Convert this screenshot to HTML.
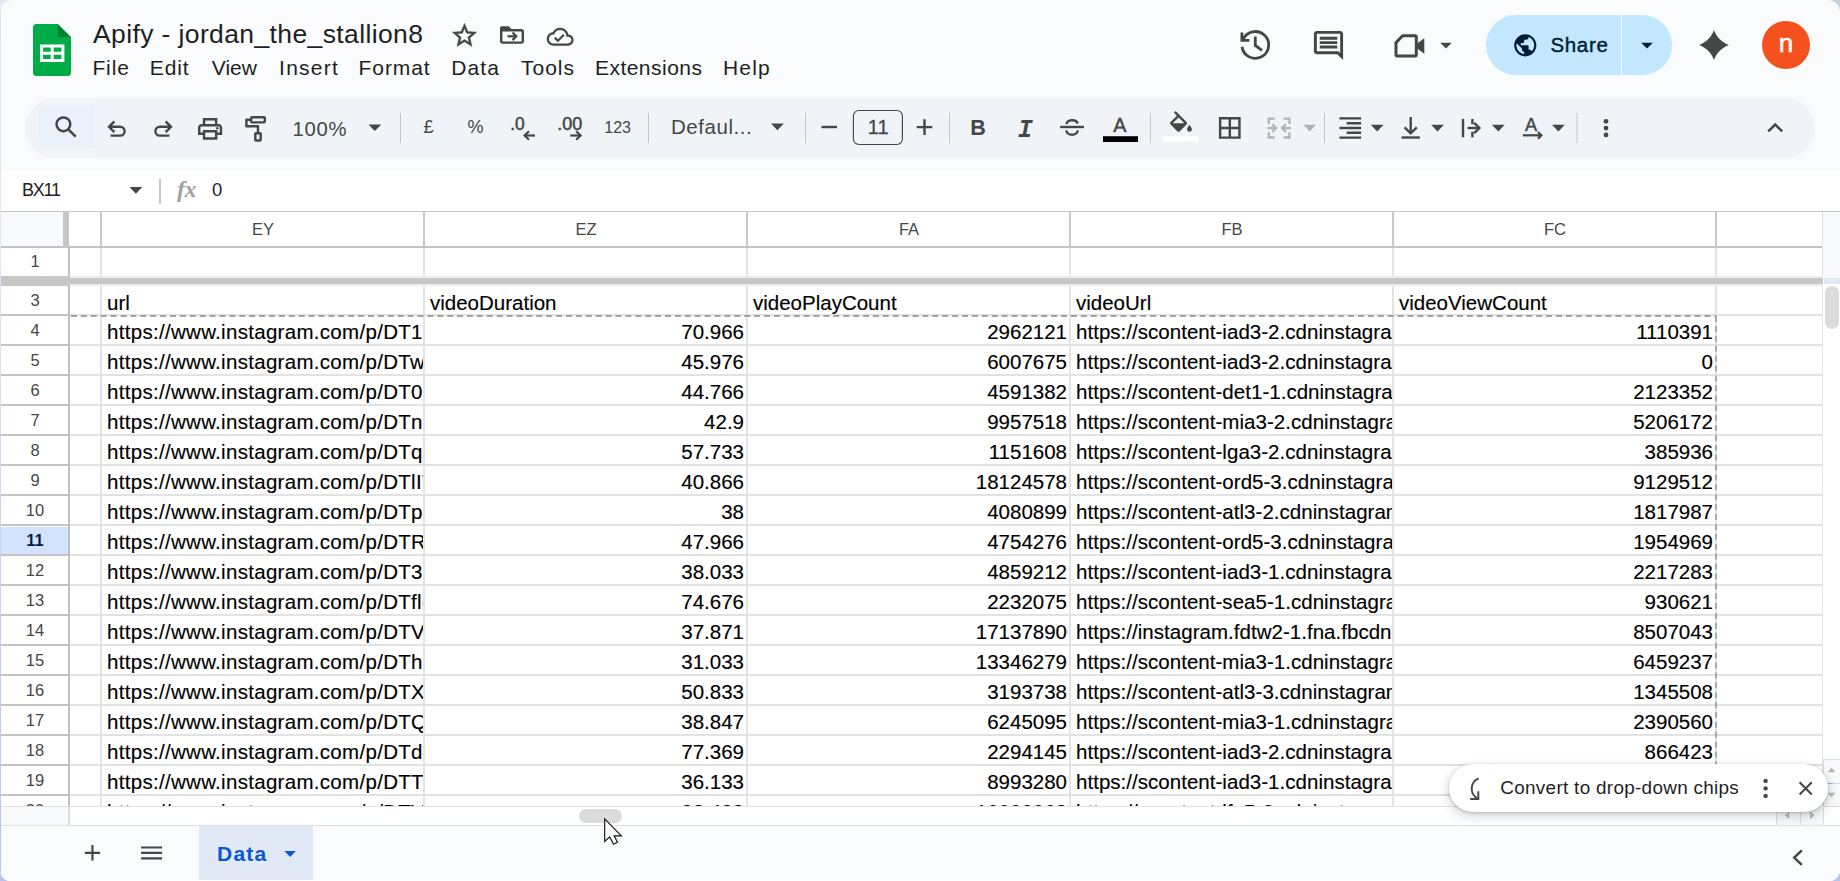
<!DOCTYPE html>
<html lang="en">
<head>
<meta charset="utf-8">
<title>Apify - jordan_the_stallion8 - Google Sheets</title>
<style>
*{box-sizing:border-box;margin:0;padding:0}
html,body{width:1840px;height:881px;overflow:hidden}
body{background:linear-gradient(to right,#e0e6f2,#c5d0e0) top/100% 50% no-repeat,#b7c4f0}
body{font-family:"Liberation Sans",Arial,sans-serif;color:#1f1f1f}
#app{position:absolute;left:0;top:0;width:1840px;height:881px;background:#f9fbfd;border-radius:12px 12px 11px 11px;overflow:hidden}
.abs{position:absolute}
svg.ic{position:absolute;fill:#444746}
.t{position:absolute;white-space:nowrap}
/* header */
#title{left:93px;top:17px;font-size:26.5px;line-height:34px;color:#1f1f1f;letter-spacing:0.38px}
.menu{top:54px;font-size:21px;line-height:28px;color:#1f1f1f}
/* toolbar */
#tb{position:absolute;left:25px;top:98px;width:1790px;height:60px;border-radius:30px;background:#f0f4f9}
.sep{position:absolute;top:113px;width:1px;height:30px;background:#c7c7c7}
.tbt{position:absolute;color:#444746;white-space:nowrap}
/* formula bar */
#fb{position:absolute;left:0;top:170px;width:1840px;height:41px;background:#fff}
/* grid */
#gridbg{position:absolute;left:0;top:211px;width:1840px;height:595px;background:#fff}
#grid{position:absolute;left:0;top:0;width:1840px;height:806px;overflow:hidden}
.vl{position:absolute;width:1px;background:#e1e1e1}
.hl{position:absolute;left:70px;width:1753px;height:1.5px;background:#e2e2e2}
.rb{position:absolute;left:0;width:68px;height:1.5px;background:#c4c4c4}
.rh{position:absolute;left:0;width:68px;height:29px;text-align:center;font-size:16.5px;line-height:27px;color:#444746;background:#fff;padding-left:2px}
.rh.sel{background:#d3e3fd;color:#041e49;font-weight:bold}
.c{position:absolute;width:322px;height:29px;font-size:20.5px;line-height:29px;color:#000;white-space:nowrap;overflow:hidden;padding:0 2px 0 6px;-webkit-text-stroke:0.15px #000}
.c.r{text-align:right}
.c.l{letter-spacing:0.3px}
.ch{position:absolute;top:1px;height:34px;line-height:35px;font-size:16.5px;padding-left:2px;color:#444746;text-align:center;background:#fff}
</style>
</head>
<body>
<div id="app">

<!-- ===== title bar ===== -->
<svg class="abs" style="left:33px;top:24px" width="38" height="52" viewBox="0 0 38 52">
  <path d="M3.5 0H24.7L38 13.3V48.5a3.5 3.5 0 0 1-3.5 3.5H3.5A3.5 3.5 0 0 1 0 48.500V3.5A3.500 3.500 0 0 1 3.5 0Z" fill="#00ac47"/>
  <path d="M24.7 0L38 13.3H28.200a3.500 3.500 0 0 1-3.500-3.500Z" fill="#00832d"/>
  <path d="M7 20.500H31.400V38H7Zm3 3V27.700H17.700V23.500Zm10.700 0V27.700H28.400V23.500ZM10 30.700V35H17.700V30.700Zm10.700 0V35H28.400V30.700Z" fill="#fff" fill-rule="evenodd"/>
</svg>
<div id="title" class="t">Apify - jordan_the_stallion8</div>
<svg class="ic" style="left:449.500px;top:21px;stroke:#444746;stroke-width:0.400" width="29" height="29" viewBox="0 0 24 24"><path d="M22 9.240l-7.190-.620L12 2 9.190 8.630 2 9.240l5.460 4.730L5.820 21 12 17.270 18.180 21l-1.630-7.030L22 9.240zM12 15.400l-3.760 2.270 1-4.280-3.320-2.880 4.380-.380L12 6.100l1.710 4.040 4.380.380-3.320 2.880 1 4.280L12 15.400z"/></svg>



<svg class="abs" style="left:0;top:0" width="1840" height="96" viewBox="0 0 1840 96" fill="#444746">
  <!-- move to folder -->
  <rect x="501.200" y="30.300" width="21.600" height="12.300" rx="1.600" fill="none" stroke="#444746" stroke-width="2.400"/>
  <path d="M500 31V27.800a1.600 1.600 0 0 1 1.600-1.600H508.600L512 29.600V31Z"/>
  <g fill="none" stroke="#444746" stroke-width="2.200"><path d="M507.500 36.300H515.400"/><path d="M512.500 32.500L516.300 36.300L512.500 40.100"/></g>
  <!-- cloud saved -->
  <g transform="translate(546.700,23.300) scale(1.1208)"><path d="M19.350 10.040C18.670 6.590 15.640 4 12 4 9.110 4 6.600 5.640 5.350 8.040 2.340 8.360 0 10.910 0 14c0 3.310 2.690 6 6 6h13c2.760 0 5-2.240 5-5 0-2.640-2.050-4.780-4.650-4.960zM19 18H6c-2.210 0-4-1.790-4-4s1.790-4 4-4h.710C7.370 7.690 9.480 6 12 6c3.040 0 5.500 2.460 5.500 5.500v.500H19c1.660 0 3 1.340 3 3s-1.340 3-3 3zm-9-3.820l-2.090-2.090L6.500 13.500 10 17l6.010-6.010-1.410-1.410z"/></g>
  <!-- version history -->
  <g fill="none" stroke="#444746" stroke-width="2.800">
    <path d="M1242.030 46.760A13.400 13.400 0 1 0 1242.900 39.900"/>
    <path d="M1241.900 32.600V40.400H1249.400"/>
    <path d="M1255.300 36.600V45.500L1262 50.400"/>
  </g>
  <!-- meet camera -->
  <path d="M1396 42.600L1402.600 35.800H1415a1.300 1.300 0 0 1 1.300 1.300V54.800a1.300 1.300 0 0 1-1.300 1.300H1397.300a1.300 1.300 0 0 1-1.300-1.300Z" fill="none" stroke="#444746" stroke-width="3" stroke-linejoin="round"/>
  <path d="M1416.500 44L1424.300 38.300V53.800L1416.500 48Z"/>
</svg>
<div class="t menu" style="left:92.4px;letter-spacing:0.90px">File</div>
<div class="t menu" style="left:149.8px;letter-spacing:0.87px">Edit</div>
<div class="t menu" style="left:211.8px;letter-spacing:0.00px">View</div>
<div class="t menu" style="left:279.1px;letter-spacing:1.24px">Insert</div>
<div class="t menu" style="left:358.6px;letter-spacing:0.92px">Format</div>
<div class="t menu" style="left:451.3px;letter-spacing:1.10px">Data</div>
<div class="t menu" style="left:521.0px;letter-spacing:0.98px">Tools</div>
<div class="t menu" style="left:594.9px;letter-spacing:0.49px">Extensions</div>
<div class="t menu" style="left:723.0px;letter-spacing:1.17px">Help</div>

<!-- right side of title bar -->

<svg class="ic" style="left:1311px;top:28px" width="35" height="35" viewBox="0 0 24 24"><path d="M21.990 4c0-1.100-.890-2-1.990-2H4c-1.100 0-2 .900-2 2v12c0 1.100.900 2 2 2h14l4 4-.010-18zM20 4v13.170L18.830 16H4V4h16zM6 12h12v2H6zm0-3h12v2H6zm0-3h12v2H6z"/></svg>

<svg class="ic" style="left:1432px;top:31px" width="28" height="28" viewBox="0 0 24 24"><path d="M7 10l5 5 5-5z"/></svg>

<div class="abs" style="left:1486px;top:15px;width:186px;height:60px;border-radius:30px;background:#c2e7ff"></div>
<div class="abs" style="left:1621px;top:15px;width:1.300px;height:60px;background:#f9fbfd"></div>
<svg class="ic" style="left:1512px;top:31.500px;fill:#001d35" width="26.600" height="26.600" viewBox="0 0 24 24"><path d="M12 2C6.480 2 2 6.480 2 12s4.480 10 10 10 10-4.480 10-10S17.520 2 12 2zm-1 17.930c-3.950-.490-7-3.850-7-7.930 0-.620.080-1.210.210-1.790L9 15v1c0 1.100.900 2 2 2v1.930zm6.900-2.540c-.260-.810-1-1.390-1.900-1.390h-1v-3c0-.550-.450-1-1-1H8v-2h2c.550 0 1-.450 1-1V7h2c1.100 0 2-.900 2-2v-.410c2.930 1.190 5 4.060 5 7.410 0 2.080-.800 3.970-2.100 5.390z"/></svg>
<div class="t" style="left:1550.500px;top:31px;font-size:20.500px;line-height:28px;color:#001d35;letter-spacing:0.650px;-webkit-text-stroke:0.400px #001d35">Share</div>
<svg class="ic" style="left:1633px;top:31px;fill:#001d35" width="28" height="28" viewBox="0 0 24 24"><path d="M7 10l5 5 5-5z"/></svg>
<svg class="ic" style="left:1699px;top:30px" width="30" height="30" viewBox="0 0 30 30"><path d="M15 0C17.500 7 23 12.500 30 15 23 17.500 17.500 23 15 30 12.500 23 7 17.500 0 15 7 12.500 12.500 7 15 0Z"/></svg>
<div class="abs" style="left:1762px;top:21px;width:48px;height:48px;border-radius:24px;background:#f4511e;color:#fff;font-size:26px;line-height:45px;text-align:center;-webkit-text-stroke:0.600px #fff">n</div>

<!-- ===== toolbar ===== -->
<div id="tb"></div>
<div class="abs" style="left:39px;top:106px;width:56px;height:42px;border-radius:6px 0 0 6px;background:#ebf1fa"></div>
<svg class="abs" style="left:0;top:98px" width="1840" height="60" viewBox="0 98 1840 60" fill="#444746" font-family="Liberation Sans, Arial, sans-serif">
<!-- search -->
<g fill="none" stroke="#444746" stroke-width="2.500" stroke-linecap="butt">
  <circle cx="63.400" cy="124.300" r="6.900"/>
  <path d="M68.300 129.300L75.700 136.700"/>
</g>
<!-- undo -->
<g fill="none" stroke="#444746" stroke-width="2.400" stroke-linejoin="miter">
  <path d="M109.500 126.800H120.200A4.400 4.400 0 0 1 120.200 135.600H110.600"/>
  <path d="M114.400 121.400L109 126.800L114.400 132.200"/>
  <path d="M170.500 126.800H159.800A4.400 4.400 0 0 0 159.800 135.600H169.400"/>
  <path d="M165.600 121.400L171 126.800L165.600 132.200"/>
</g>
<!-- print -->
<g transform="translate(195.600,114.400) scale(1.2083)"><path d="M19 8h-1V3H6v5H5c-1.660 0-3 1.340-3 3v6h4v4h12v-4h4v-6c0-1.660-1.340-3-3-3zM8 5h8v3H8V5zm8 12v2H8v-4h8v2zm2-2v-2H6v2H4v-4c0-.550.450-1 1-1h14c.550 0 1 .450 1 1v4h-2z"/><circle cx="18" cy="11.500" r="1"/></g>
<!-- paint format -->
<g fill="none" stroke="#444746" stroke-width="2.400" stroke-linejoin="round">
  <rect x="251.200" y="117.200" width="13.600" height="5.200" rx="0.800"/>
  <path d="M251.200 119.800H246.400V126.300H258V133"/>
  <rect x="255.300" y="133.200" width="5.400" height="7.300" rx="0.800"/>
</g>
<!-- zoom -->
<text x="292.500" y="135.600" font-size="20.300" letter-spacing="0.700">100%</text>
<path d="M368.400 124.400h12.800l-6.400 6.600z"/>
<rect x="400" y="113" width="1" height="30" fill="#c7c7c7"/>
<text x="428.500" y="132.600" font-size="18" text-anchor="middle">£</text>
<text x="475.400" y="132.600" font-size="18" text-anchor="middle">%</text>
<!-- decrease decimals -->
<text x="510.300" y="129.700" font-size="17.500" stroke="#444746" stroke-width="0.500" textLength="14.500" lengthAdjust="spacingAndGlyphs">.0</text>
<g fill="none" stroke="#444746" stroke-width="2.200">
  <path d="M535 135.500H524.600"/><path d="M529 131.200L524.600 135.500L529 139.800"/>
  <path d="M570.200 135.500H580.500"/><path d="M576.200 131.200L580.600 135.500L576.200 139.800"/>
</g>
<text x="557.200" y="129.700" font-size="17.500" stroke="#444746" stroke-width="0.500" textLength="25" lengthAdjust="spacingAndGlyphs">.00</text>
<text x="604.300" y="132.600" font-size="17.300" textLength="26.700" lengthAdjust="spacingAndGlyphs">123</text>
<rect x="648" y="113" width="1" height="30" fill="#c7c7c7"/>
<text x="671" y="133.900" font-size="20.500" letter-spacing="0.550">Defaul...</text>
<path d="M771 123.600h12.800l-6.400 6.600z"/>
<rect x="805" y="113" width="1" height="30" fill="#c7c7c7"/>
<rect x="821.500" y="125.800" width="15.500" height="2.400"/>
<rect x="853.400" y="110.500" width="49" height="34" rx="5.500" fill="none" stroke="#444746" stroke-width="1.150"/>
<text x="878.200" y="133.900" font-size="20" text-anchor="middle" stroke="#444746" stroke-width="0.300">11</text>
<path d="M916.700 125.900h6.600v-6.600h2.400v6.600h6.600v2.400h-6.600v6.600h-2.400v-6.600h-6.600z"/>
<rect x="949" y="113" width="1" height="30" fill="#c7c7c7"/>
<!-- bold / italic / strike / text colour -->
<text x="978" y="135.200" font-size="21.500" font-weight="bold" text-anchor="middle">B</text>
<text x="1025.200" y="136.800" font-size="25" font-weight="bold" font-style="italic" text-anchor="middle" font-family="Liberation Mono, monospace">I</text>
<g fill="none" stroke="#444746" stroke-width="2.400">
  <path d="M1060.200 127H1084"/>
  <path d="M1066.500 124.200A5.700 4.300 0 0 1 1077.700 123.500"/>
  <path d="M1066.200 130.400A5.900 5 0 0 0 1077.900 130.400"/>
</g>
<text x="1119.900" y="131.700" font-size="19.700" text-anchor="middle" stroke="#444746" stroke-width="0.450">A</text>
<rect x="1103" y="136.200" width="35" height="5.800" fill="#000"/>
<rect x="1150" y="113" width="1" height="30" fill="#c7c7c7"/>
<!-- fill colour -->
<g transform="translate(1166.400,111.100) scale(1.215)"><path d="M16.560 8.940L7.620 0 6.210 1.410l2.380 2.380-5.150 5.150c-.590.590-.590 1.540 0 2.120l5.500 5.500c.290.290.680.440 1.060.440s.770-.150 1.060-.440l5.500-5.500c.590-.580.590-1.530 0-2.120zM5.210 10L10 5.210 14.790 10H5.210zM19 11.500s-2 2.170-2 3.500c0 1.100.900 2 2 2s2-.900 2-2c0-1.330-2-3.500-2-3.500z"/></g>
<rect x="1163" y="136.200" width="35" height="5.800" fill="#fff"/>
<!-- borders -->
<g transform="translate(1215.300,113.500) scale(1.2083)"><path d="M3 3v18h18V3H3zm8 16H5v-6h6v6zm0-8H5V5h6v6zm8 8h-6v-6h6v6zm0-8h-6V5h6v6z"/></g>
<!-- merge (disabled) -->
<g fill="none" stroke="#b3b5b4" stroke-width="2.300">
  <path d="M1274.600 118.700H1268.700V124"/><path d="M1268.700 132.200V137.500H1274.600"/>
  <path d="M1283.600 118.700H1289.500V124"/><path d="M1289.500 132.200V137.500H1283.600"/>
  <path d="M1267.400 128.100H1275.600"/><path d="M1272.300 124.200L1276.200 128.100L1272.300 132"/>
  <path d="M1290.900 128.100H1282.600"/><path d="M1285.900 124.200L1282 128.100L1285.900 132"/>
</g>
<path d="M1303.300 124.800h12.800l-6.400 6.800z" fill="#b3b5b4"/>
<rect x="1324" y="113" width="1" height="30" fill="#c7c7c7"/>
<!-- h-align -->
<path d="M1339.400 117.200h21.700v2.400h-21.700zM1346.600 122h14.500v2.400h-14.500zM1339.400 126.800h21.700v2.400h-21.700zM1346.600 131.600h14.500v2.400h-14.500zM1339.400 136.400h21.700v2.400h-21.700z"/>
<path d="M1370.800 124.800h12.800l-6.400 6.800z"/>
<!-- v-align -->
<path d="M1401.600 136.300h18.200v2.400h-18.200z"/>
<g fill="none" stroke="#444746" stroke-width="2.400"><path d="M1410.700 117V132.600"/><path d="M1404.600 127.300L1410.700 133.400L1416.800 127.300"/></g>
<path d="M1431.100 124.800h12.800l-6.400 6.800z"/>
<!-- wrap -->
<g fill="none" stroke="#444746" stroke-width="2.400">
  <path d="M1463 118.900V137.200"/><path d="M1472.400 118.900V124.300M1472.400 131.800V137.200"/>
  <path d="M1467.600 128H1478.600"/><path d="M1474.200 122.800L1479.400 128L1474.200 133.200"/>
</g>
<path d="M1491.900 124.800h12.800l-6.400 6.800z"/>
<!-- rotate -->
<text x="1531" y="131.300" font-size="18.200" text-anchor="middle" stroke="#444746" stroke-width="0.450">A</text>
<g fill="none" stroke="#444746" stroke-width="2.200"><path d="M1522.800 135.300H1540.600"/><path d="M1538 132L1541.400 135.300L1538 138.600"/></g>
<path d="M1552 124.800h12.800l-6.400 6.800z"/>
<rect x="1576.500" y="113" width="1" height="30" fill="#c7c7c7"/>
<circle cx="1606" cy="121.300" r="2.400"/><circle cx="1606" cy="128.100" r="2.400"/><circle cx="1606" cy="134.900" r="2.400"/>
<path d="M1768.200 131.400L1775.200 124.500L1782.200 131.400" fill="none" stroke="#444746" stroke-width="2.500"/>
</svg>


<!-- ===== formula bar ===== -->
<div id="fb"></div>
<div class="t" style="left:22px;top:177px;font-size:18px;line-height:26px;color:#1f1f1f;letter-spacing:-1.250px">BX11</div>
<svg class="abs" style="left:128.500px;top:186.200px" width="14" height="9" viewBox="0 0 14 9"><path d="M0.500 1h12.800l-6.400 6.800z" fill="#444746"/></svg>
<div class="abs" style="left:159px;top:179px;width:2px;height:25px;background:#c7c7c7"></div>
<div class="t" style="left:177px;top:173.500px;font-size:24px;line-height:30px;color:#a1a3a2;font-family:'Liberation Serif',serif;font-style:italic;font-weight:bold;letter-spacing:-0.500px">fx</div>
<div class="t" style="left:212px;top:177px;font-size:18.500px;line-height:26px;color:#1f1f1f">0</div>


<!-- ===== grid ===== -->
<div id="gridbg"></div>
<div id="grid">
<!-- top border of grid -->
<div class="abs" style="left:0;top:211px;width:1840px;height:1px;background:#c4c7c5"></div>
<!-- corner cell -->
<div class="abs" style="left:0;top:212px;width:63px;height:34px;background:#f8fafd"></div>
<!-- column header labels -->
<div class="ch" style="left:101px;top:212px;width:322px">EY</div>
<div class="ch" style="left:424px;top:212px;width:322px">EZ</div>
<div class="ch" style="left:747px;top:212px;width:322px">FA</div>
<div class="ch" style="left:1070px;top:212px;width:322px">FB</div>
<div class="ch" style="left:1393px;top:212px;width:322px">FC</div>
<!-- header vertical borders -->
<div class="abs" style="left:100px;top:212px;width:2px;height:34px;background:#c9c9c9"></div>
<div class="abs" style="left:423px;top:212px;width:2px;height:34px;background:#c9c9c9"></div>
<div class="abs" style="left:746px;top:212px;width:2px;height:34px;background:#c9c9c9"></div>
<div class="abs" style="left:1069px;top:212px;width:2px;height:34px;background:#c9c9c9"></div>
<div class="abs" style="left:1392px;top:212px;width:2px;height:34px;background:#c9c9c9"></div>
<div class="abs" style="left:1715px;top:212px;width:2px;height:34px;background:#c9c9c9"></div>
<!-- header bottom border -->
<div class="abs" style="left:0;top:246px;width:1823px;height:2px;background:#c4c4c4"></div>
<!-- cell vertical gridlines -->
<div class="vl" style="left:100px;top:248px;width:2px;height:558px;background:#e4e4e4"></div>
<div class="vl" style="left:423px;top:248px;width:2px;height:558px;background:#e4e4e4"></div>
<div class="vl" style="left:746px;top:248px;width:2px;height:558px;background:#e4e4e4"></div>
<div class="vl" style="left:1069px;top:248px;width:2px;height:558px;background:#e4e4e4"></div>
<div class="vl" style="left:1392px;top:248px;width:2px;height:558px;background:#e4e4e4"></div>
<div class="vl" style="left:1715px;top:248px;width:2px;height:558px;background:#e4e4e4"></div>
<div class="vl" style="left:1822px;top:212px;height:594px;background:#e4e4e4"></div>
<!-- row 1 / row 3 headers -->
<div class="rh" style="top:248px;height:28px;line-height:27px">1</div>
<div class="rh" style="top:286px;height:28px;line-height:28px">3</div>
<div class="abs" style="left:0;top:314.100px;width:68px;height:1.500px;background:#c4c4c4"></div>
<div class="hl" style="top:314.250px"></div>
<!-- row 3 labels -->
<div class="c" style="top:286px;left:101px;line-height:33px">url</div>
<div class="c" style="top:286px;left:424px;line-height:33px">videoDuration</div>
<div class="c" style="top:286px;left:747px;line-height:33px">videoPlayCount</div>
<div class="c" style="top:286px;left:1070px;line-height:33px">videoUrl</div>
<div class="c" style="top:286px;left:1393px;line-height:33px">videoViewCount</div>

<div class="rh" style="top:317px">4</div>
<div class="c l" style="top:317px;left:101px">https://www.instagram.com/p/DT1kQ/</div>
<div class="c r" style="top:317px;left:424px">70.966</div>
<div class="c r" style="top:317px;left:747px">2962121</div>
<div class="c l" style="top:317px;left:1070px;letter-spacing:0.03px">https://scontent-iad3-2.cdninstagram.com</div>
<div class="c r" style="top:317px;left:1393px">1110391</div>
<div class="hl" style="top:344.25px"></div>
<div class="rb" style="top:344.25px"></div>
<div class="rh" style="top:347px">5</div>
<div class="c l" style="top:347px;left:101px">https://www.instagram.com/p/DTwmA/</div>
<div class="c r" style="top:347px;left:424px">45.976</div>
<div class="c r" style="top:347px;left:747px">6007675</div>
<div class="c l" style="top:347px;left:1070px;letter-spacing:0.03px">https://scontent-iad3-2.cdninstagram.com</div>
<div class="c r" style="top:347px;left:1393px">0</div>
<div class="hl" style="top:374.25px"></div>
<div class="rb" style="top:374.25px"></div>
<div class="rh" style="top:377px">6</div>
<div class="c l" style="top:377px;left:101px">https://www.instagram.com/p/DT09x/</div>
<div class="c r" style="top:377px;left:424px">44.766</div>
<div class="c r" style="top:377px;left:747px">4591382</div>
<div class="c l" style="top:377px;left:1070px;letter-spacing:0.03px">https://scontent-det1-1.cdninstagram.com</div>
<div class="c r" style="top:377px;left:1393px">2123352</div>
<div class="hl" style="top:404.25px"></div>
<div class="rb" style="top:404.25px"></div>
<div class="rh" style="top:407px">7</div>
<div class="c l" style="top:407px;left:101px">https://www.instagram.com/p/DTneB/</div>
<div class="c r" style="top:407px;left:424px">42.9</div>
<div class="c r" style="top:407px;left:747px">9957518</div>
<div class="c l" style="top:407px;left:1070px;letter-spacing:0.03px">https://scontent-mia3-2.cdninstagram.com</div>
<div class="c r" style="top:407px;left:1393px">5206172</div>
<div class="hl" style="top:434.25px"></div>
<div class="rb" style="top:434.25px"></div>
<div class="rh" style="top:437px">8</div>
<div class="c l" style="top:437px;left:101px">https://www.instagram.com/p/DTqeR/</div>
<div class="c r" style="top:437px;left:424px">57.733</div>
<div class="c r" style="top:437px;left:747px">1151608</div>
<div class="c l" style="top:437px;left:1070px;letter-spacing:0.03px">https://scontent-lga3-2.cdninstagram.com</div>
<div class="c r" style="top:437px;left:1393px">385936</div>
<div class="hl" style="top:464.25px"></div>
<div class="rb" style="top:464.25px"></div>
<div class="rh" style="top:467px">9</div>
<div class="c l" style="top:467px;left:101px">https://www.instagram.com/p/DTlITk/</div>
<div class="c r" style="top:467px;left:424px">40.866</div>
<div class="c r" style="top:467px;left:747px">18124578</div>
<div class="c l" style="top:467px;left:1070px;letter-spacing:0.03px">https://scontent-ord5-3.cdninstagram.com</div>
<div class="c r" style="top:467px;left:1393px">9129512</div>
<div class="hl" style="top:494.25px"></div>
<div class="rb" style="top:494.25px"></div>
<div class="rh" style="top:497px">10</div>
<div class="c l" style="top:497px;left:101px">https://www.instagram.com/p/DTprK/</div>
<div class="c r" style="top:497px;left:424px">38</div>
<div class="c r" style="top:497px;left:747px">4080899</div>
<div class="c l" style="top:497px;left:1070px;letter-spacing:0.03px">https://scontent-atl3-2.cdninstagram.com</div>
<div class="c r" style="top:497px;left:1393px">1817987</div>
<div class="hl" style="top:524.25px"></div>
<div class="rb" style="top:524.25px"></div>
<div class="rh sel" style="top:527px">11</div>
<div class="c l" style="top:527px;left:101px">https://www.instagram.com/p/DTRkP/</div>
<div class="c r" style="top:527px;left:424px">47.966</div>
<div class="c r" style="top:527px;left:747px">4754276</div>
<div class="c l" style="top:527px;left:1070px;letter-spacing:0.03px">https://scontent-ord5-3.cdninstagram.com</div>
<div class="c r" style="top:527px;left:1393px">1954969</div>
<div class="hl" style="top:554.25px"></div>
<div class="rb" style="top:554.25px"></div>
<div class="rh" style="top:557px">12</div>
<div class="c l" style="top:557px;left:101px">https://www.instagram.com/p/DT3xL/</div>
<div class="c r" style="top:557px;left:424px">38.033</div>
<div class="c r" style="top:557px;left:747px">4859212</div>
<div class="c l" style="top:557px;left:1070px;letter-spacing:0.03px">https://scontent-iad3-1.cdninstagram.com</div>
<div class="c r" style="top:557px;left:1393px">2217283</div>
<div class="hl" style="top:584.25px"></div>
<div class="rb" style="top:584.25px"></div>
<div class="rh" style="top:587px">13</div>
<div class="c l" style="top:587px;left:101px">https://www.instagram.com/p/DTflc/</div>
<div class="c r" style="top:587px;left:424px">74.676</div>
<div class="c r" style="top:587px;left:747px">2232075</div>
<div class="c l" style="top:587px;left:1070px;letter-spacing:0.03px">https://scontent-sea5-1.cdninstagram.com</div>
<div class="c r" style="top:587px;left:1393px">930621</div>
<div class="hl" style="top:614.25px"></div>
<div class="rb" style="top:614.25px"></div>
<div class="rh" style="top:617px">14</div>
<div class="c l" style="top:617px;left:101px">https://www.instagram.com/p/DTVaM/</div>
<div class="c r" style="top:617px;left:424px">37.871</div>
<div class="c r" style="top:617px;left:747px">17137890</div>
<div class="c l" style="top:617px;left:1070px;letter-spacing:0.03px">https://instagram.fdtw2-1.fna.fbcdn.net</div>
<div class="c r" style="top:617px;left:1393px">8507043</div>
<div class="hl" style="top:644.25px"></div>
<div class="rb" style="top:644.25px"></div>
<div class="rh" style="top:647px">15</div>
<div class="c l" style="top:647px;left:101px">https://www.instagram.com/p/DThuN/</div>
<div class="c r" style="top:647px;left:424px">31.033</div>
<div class="c r" style="top:647px;left:747px">13346279</div>
<div class="c l" style="top:647px;left:1070px;letter-spacing:0.03px">https://scontent-mia3-1.cdninstagram.com</div>
<div class="c r" style="top:647px;left:1393px">6459237</div>
<div class="hl" style="top:674.25px"></div>
<div class="rb" style="top:674.25px"></div>
<div class="rh" style="top:677px">16</div>
<div class="c l" style="top:677px;left:101px">https://www.instagram.com/p/DTXoP/</div>
<div class="c r" style="top:677px;left:424px">50.833</div>
<div class="c r" style="top:677px;left:747px">3193738</div>
<div class="c l" style="top:677px;left:1070px;letter-spacing:0.03px">https://scontent-atl3-3.cdninstagram.com</div>
<div class="c r" style="top:677px;left:1393px">1345508</div>
<div class="hl" style="top:704.25px"></div>
<div class="rb" style="top:704.25px"></div>
<div class="rh" style="top:707px">17</div>
<div class="c l" style="top:707px;left:101px">https://www.instagram.com/p/DTQwE/</div>
<div class="c r" style="top:707px;left:424px">38.847</div>
<div class="c r" style="top:707px;left:747px">6245095</div>
<div class="c l" style="top:707px;left:1070px;letter-spacing:0.03px">https://scontent-mia3-1.cdninstagram.com</div>
<div class="c r" style="top:707px;left:1393px">2390560</div>
<div class="hl" style="top:734.25px"></div>
<div class="rb" style="top:734.25px"></div>
<div class="rh" style="top:737px">18</div>
<div class="c l" style="top:737px;left:101px">https://www.instagram.com/p/DTdpZ/</div>
<div class="c r" style="top:737px;left:424px">77.369</div>
<div class="c r" style="top:737px;left:747px">2294145</div>
<div class="c l" style="top:737px;left:1070px;letter-spacing:0.03px">https://scontent-iad3-2.cdninstagram.com</div>
<div class="c r" style="top:737px;left:1393px">866423</div>
<div class="hl" style="top:764.25px"></div>
<div class="rb" style="top:764.25px"></div>
<div class="rh" style="top:767px">19</div>
<div class="c l" style="top:767px;left:101px">https://www.instagram.com/p/DTTZa/</div>
<div class="c r" style="top:767px;left:424px">36.133</div>
<div class="c r" style="top:767px;left:747px">8993280</div>
<div class="c l" style="top:767px;left:1070px;letter-spacing:0.03px">https://scontent-iad3-1.cdninstagram.com</div>
<div class="c r" style="top:767px;left:1393px">4318222</div>
<div class="hl" style="top:794.25px"></div>
<div class="rb" style="top:794.25px"></div>
<div class="rh" style="top:797px">20</div>
<div class="c l" style="top:797px;left:101px">https://www.instagram.com/p/DTVbn/</div>
<div class="c r" style="top:797px;left:424px">38.433</div>
<div class="c r" style="top:797px;left:747px">10000068</div>
<div class="c l" style="top:797px;left:1070px;letter-spacing:0.03px">https://scontent-lfo5-2.cdninstagram.com</div>
<div class="c r" style="top:797px;left:1393px">5012034</div>
<div class="hl" style="top:824.25px"></div>
<div class="rb" style="top:824.25px"></div>
<!-- frozen column bar in header + row header right border -->
<div class="abs" style="left:63px;top:212px;width:6px;height:35px;background:#c7c7c7"></div>
<div class="abs" style="left:68px;top:246px;width:2px;height:560px;background:#c0c0c0"></div>
<!-- frozen row bar -->
<div class="abs" style="left:0;top:276px;width:70px;height:10px;background:#c7c7c7"></div>
<div class="abs" style="left:70px;top:276px;width:1753px;height:10px;background:#ececec"></div>
<div class="abs" style="left:70px;top:277.500px;width:1753px;height:6.500px;background:#c7c7c7"></div>
<!-- dashed copy-range outline -->
<svg class="abs" style="left:70px;top:314px" width="1650" height="492" viewBox="70 314 1650 492">
  <path d="M71 316H1716" fill="none" stroke="#8a8a8a" stroke-width="1.300" stroke-dasharray="6 3.900"/>
  <path d="M1716 316V806" fill="none" stroke="#8a8a8a" stroke-width="1.300" stroke-dasharray="6 3.900"/>
</svg>
<!-- vertical scrollbar -->
<div class="abs" style="left:1823px;top:212px;width:17px;height:66px;background:#f8f9fa"></div>
<div class="abs" style="left:1824px;top:278px;width:16px;height:5.500px;background:#e0e9f6"></div>
<div class="abs" style="left:1823px;top:284px;width:17px;height:522px;background:#fff"></div>
<div class="abs" style="left:1825.200px;top:286px;width:13.600px;height:43px;border-radius:6.800px;background:#dcdcdc"></div>

</div>

<!-- horizontal scrollbar row -->
<div class="abs" style="left:0;top:805.500px;width:1840px;height:20.500px;background:#fff"></div>
<div class="abs" style="left:0;top:805.500px;width:68px;height:20px;background:#f8f9fa"></div>
<div class="abs" style="left:68px;top:805.500px;width:2px;height:20px;background:#dcdcdc"></div>
<div class="abs" style="left:0;top:805.800px;width:1840px;height:1.200px;background:#e2e2e2"></div>
<div class="abs" style="left:579px;top:809px;width:43px;height:14px;border-radius:7px;background:#dcdcdc"></div>
<!-- scroll buttons -->
<div class="abs" style="left:1823px;top:759px;width:17px;height:47px;background:#f8f9fa"></div>
<div class="abs" style="left:1823px;top:759px;width:17px;height:1px;background:#dcdcdc"></div>
<div class="abs" style="left:1823px;top:783px;width:17px;height:1px;background:#dcdcdc"></div>
<div class="abs" style="left:1827px;top:782.500px;width:6px;height:1.500px;background:#8ab4f8"></div>
<div class="abs" style="left:1823px;top:759px;width:1px;height:67px;background:#dcdcdc"></div>
<div class="abs" style="left:1776px;top:806px;width:47px;height:19.500px;background:#f8f9fa"></div>
<div class="abs" style="left:1776px;top:806px;width:1px;height:19.500px;background:#dcdcdc"></div>
<div class="abs" style="left:1800px;top:806px;width:1px;height:19.500px;background:#dcdcdc"></div>
<svg class="abs" style="left:1776px;top:759px" width="64" height="67" viewBox="1776 759 64 67" fill="#b8b8b8">
  <path d="M1827.700 772.200L1831.500 767.500L1835.300 772.200Z"/><path d="M1827.700 792.700L1831.500 797.400L1835.300 792.700Z"/>
  <path d="M1789.300 811.500L1784.700 815.300L1789.300 819.100Z"/><path d="M1810 811.500L1814.600 815.300L1810 819.100Z"/>
</svg>
<div class="abs" style="left:1823px;top:805.800px;width:17px;height:1px;background:#dcdcdc"></div>
<!-- sheet tab bar -->
<div class="abs" style="left:0;top:824.600px;width:1840px;height:1.200px;background:#dfe1e4"></div>
<div class="abs" style="left:0;top:825.800px;width:1840px;height:56px;background:#f9fbfd"></div>
<div class="abs" style="left:199px;top:825.800px;width:114px;height:56px;background:#e1e9f7"></div>
<svg class="abs" style="left:0;top:826px" width="1840" height="55" viewBox="0 826 1840 55" fill="#444746">
  <path d="M84.800 851.800h6.550v-6.700h2.200v6.700h6.550v2.200h-6.550v6.600h-2.200v-6.600h-6.550z"/>
  <path d="M141.100 846.400h21v2.200h-21zM141.100 851.800h21v2.200h-21zM141.100 857.300h21v2.200h-21z"/>
  <path d="M284.400 851.100h11.400l-5.700 5.800z" fill="#0b57d0"/>
  <path d="M1801.800 850.300L1794.200 857.600L1801.800 864.900" fill="none" stroke="#444746" stroke-width="2.500"/>
</svg>
<div class="t" style="left:217px;top:839.500px;font-size:21px;line-height:28px;font-weight:bold;color:#0b57d0;letter-spacing:1.250px">Data</div>
<!-- suggestion chip -->
<div class="abs" style="left:1448.800px;top:764px;width:379px;height:48px;border-radius:24px;background:#fff;box-shadow:0 1px 3px rgba(60,64,67,.3),0 4px 8px 3px rgba(60,64,67,.15)"></div>
<div class="t" style="left:1500.300px;top:774px;font-size:18.900px;line-height:28px;color:#1f1f1f;letter-spacing:0.300px">Convert to drop-down chips</div>
<svg class="abs" style="left:1450px;top:764px" width="376" height="48" viewBox="1450 764 376 48" fill="#444746">
  <path d="M1478.700 778.400A11 11 0 0 0 1477.400 798.300" fill="none" stroke="#444746" stroke-width="2"/>
  <path d="M1478.300 791.200V799.100H1470.200" fill="none" stroke="#444746" stroke-width="2"/>
  <circle cx="1765.600" cy="780.900" r="2.200"/><circle cx="1765.600" cy="788.400" r="2.200"/><circle cx="1765.600" cy="795.900" r="2.200"/>
  <path d="M1799.600 782.300L1811.800 794.500M1811.800 782.300L1799.600 794.500" fill="none" stroke="#444746" stroke-width="2"/>
</svg>
<!-- mouse pointer -->
<svg class="abs" style="left:600px;top:814px" width="28" height="36" viewBox="600 814 28 36">
  <path d="M604.700 818.900V841.500L609.700 836.900L613.500 844.200L617.500 842.200L614.100 835.800H621.300Z" fill="#fff" stroke="#111" stroke-width="1.150" stroke-linejoin="miter"/>
</svg>

<div class="abs" style="left:0;top:880px;width:1840px;height:1px;background:#fff"></div>
<div class="abs" style="left:0;top:0;width:1px;height:881px;background:linear-gradient(to bottom,#e2e4ea 0,#dfe6f6 30%,#c4cff2 70%,#b9c6f0 100%)"></div>

</div>
</body>
</html>
